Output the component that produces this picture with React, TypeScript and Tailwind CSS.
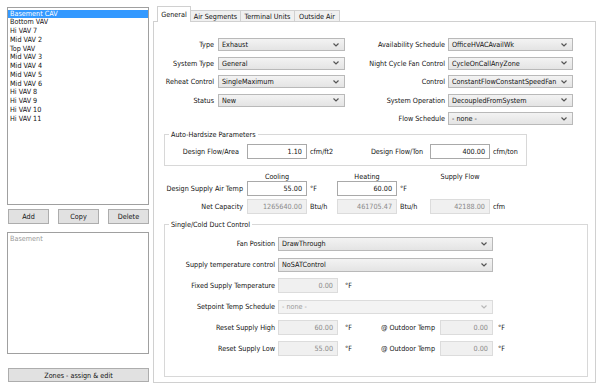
import React from 'react';

const units = ['Basement CAV', 'Bottom VAV', 'Hi VAV 7', 'Mid VAV 2', 'Top VAV', 'Mid VAV 3', 'Mid VAV 4', 'Mid VAV 5', 'Mid VAV 6', 'Hi VAV 8', 'Hi VAV 9', 'Hi VAV 10', 'Hi VAV 11'];

function Chevron({ disabled }: { disabled?: boolean }) {
  return (
    <svg width="6" height="4" viewBox="0 0 6 4" className="shrink-0">
      <path d="M0.5 0.5 L3 3 L5.5 0.5" fill="none" stroke={disabled ? '#b8b8b8' : '#555'} strokeWidth="1.2" />
    </svg>
  );
}

function Select({ value, w, h = 'h-[13px]', disabled }: { value: string; w: string; h?: string; disabled?: boolean }) {
  return (
    <div
      className={`${w} ${h} flex items-center justify-between pl-[3px] pr-[5px] border ${
        disabled ? 'border-[#dcdcdc] bg-[#f3f3f3] text-[#999]' : 'border-[#b9b9b9] bg-linear-to-b from-[#f3f3f3] to-[#e4e4e4] text-[#111]'
      }`}
    >
      <span className="whitespace-nowrap">{value}</span>
      <Chevron disabled={disabled} />
    </div>
  );
}

function Num({ value, w = 'w-[60px]', disabled }: { value: string; w?: string; disabled?: boolean }) {
  return (
    <div
      className={`${w} h-[15px] flex items-center justify-end pr-[4px] border ${
        disabled ? 'border-[#dcdcdc] bg-[#f0f0f0] text-[#8a8a8a]' : 'border-[#a9a9a9] bg-white text-[#111]'
      }`}
    >
      {value}
    </div>
  );
}

function Btn({ label, w }: { label: string; w: string }) {
  return <div className={`${w} flex items-center justify-center border border-[#adadad] bg-[#e1e1e1] text-[#111]`}>{label}</div>;
}

export default function App() {
  const left = [
    ['Type', 'Exhaust'],
    ['System Type', 'General'],
    ['Reheat Control', 'SingleMaximum'],
    ['Status', 'New'],
  ];
  const right = [
    ['Availability Schedule', 'OfficeHVACAvailWk'],
    ['Night Cycle Fan Control', 'CycleOnCallAnyZone'],
    ['Control', 'ConstantFlowConstantSpeedFan'],
    ['System Operation', 'DecoupledFromSystem'],
    ['Flow Schedule', '- none -'],
  ];

  return (
    <div className="w-[602px] h-[384px] bg-white flex items-start text-[7.2px] leading-[9px] text-[#111] font-['DejaVu_Sans_Condensed','Liberation_Sans',sans-serif] overflow-hidden">
      {/* left column */}
      <div className="ml-[7px] mt-[7px] w-[142px] flex flex-col">
        <div className="h-[198px] border border-[#a0a0a0] bg-white pt-[1.5px]">
          {units.map((u, i) => (
            <div key={u} className={`h-[8.77px] leading-[8.77px] pl-[2px] ${i === 0 ? 'bg-[#3399ff] text-white' : ''}`}>
              {u}
            </div>
          ))}
        </div>
        <div className="mt-[4px] h-[15px] flex justify-between pl-[1px]">
          <Btn label="Add" w="w-[41px]" />
          <Btn label="Copy" w="w-[41px]" />
          <Btn label="Delete" w="w-[41px]" />
        </div>
        <div className="mt-[8px] h-[122px] border border-[#a0a0a0] bg-white pl-[2px] pt-[1px] text-[#999]">Basement</div>
        <div className="mt-[14px] h-[14px] flex pl-[1px]">
          <Btn label="Zones - assign & edit" w="w-[141px]" />
        </div>
      </div>

      {/* right tab panel */}
      <div className="ml-[4px] mt-[6px] w-[443px] flex flex-col">
        <div className="flex items-end pl-[4px] h-[15px]">
          <div className="relative z-10 -mb-px h-[16px] w-[34px] flex items-center justify-center border border-b-0 border-[#d0d0d0] bg-white">General</div>
          <div className="h-[11px] w-[50px] flex items-center justify-center border border-l-0 border-b-0 border-[#d0d0d0] bg-[#f0f0f0]">Air Segments</div>
          <div className="h-[11px] w-[54px] flex items-center justify-center border border-l-0 border-b-0 border-[#d0d0d0] bg-[#f0f0f0]">Terminal Units</div>
          <div className="h-[11px] w-[45px] flex items-center justify-center border border-l-0 border-b-0 border-[#d0d0d0] bg-[#f0f0f0]">Outside Air</div>
        </div>
        <div className="h-[362px] border border-[#d0d0d0] bg-white flex flex-col">
          {/* top selects */}
          <div className="mt-[16px] h-[87px] flex items-start">
            <div className="ml-[4px] flex flex-col gap-[5.5px]">
              {left.map(([l, v]) => (
                <div key={l} className="h-[13px] flex items-center">
                  <div className="w-[60px] pr-[4px] text-right whitespace-nowrap">{l}</div>
                  <Select value={v} w="w-[127px]" />
                </div>
              ))}
            </div>
            <div className="flex flex-col gap-[5.5px]">
              {right.map(([l, v]) => (
                <div key={l} className="h-[13px] flex items-center">
                  <div className="w-[103px] pr-[3px] text-right whitespace-nowrap">{l}</div>
                  <Select value={v} w="w-[125px]" />
                </div>
              ))}
            </div>
          </div>

          {/* auto-hardsize */}
          <fieldset className="mt-[5px] ml-[10px] w-[363px] border border-[#d8d8d8] pb-[6px]">
            <legend className="ml-[4px] px-[2px] leading-[9px]">Auto-Hardsize Parameters</legend>
            <div className="mt-[4.5px] flex items-center">
              <div className="w-[82px] pr-[8px] text-right whitespace-nowrap">Design Flow/Area</div>
              <Num value="1.10" />
              <div className="w-[30px] pl-[3px]">cfm/ft2</div>
              <div className="w-[93px] pr-[7px] text-right whitespace-nowrap">Design Flow/Ton</div>
              <Num value="400.00" />
              <div className="pl-[3px]">cfm/ton</div>
            </div>
          </fieldset>

          {/* temperatures */}
          <div className="mt-[6px] flex flex-col">
            <div className="h-[9px] flex items-center">
              <div className="w-[93px]" />
              <div className="w-[60px] text-center">Cooling</div>
              <div className="w-[30px]" />
              <div className="w-[60px] text-center">Heating</div>
              <div className="w-[33px]" />
              <div className="w-[60px] text-center">Supply Flow</div>
            </div>
            <div className="h-[15px] flex items-center">
              <div className="w-[93px] pr-[4px] text-right whitespace-nowrap">Design Supply Air Temp</div>
              <Num value="55.00" />
              <div className="w-[30px] pl-[3px]">°F</div>
              <Num value="60.00" />
              <div className="w-[33px] pl-[3px]">°F</div>
            </div>
            <div className="mt-[3px] h-[15px] flex items-center">
              <div className="w-[93px] pr-[4px] text-right whitespace-nowrap">Net Capacity</div>
              <Num value="1265640.00" disabled />
              <div className="w-[30px] pl-[3px]">Btu/h</div>
              <Num value="461705.47" disabled />
              <div className="w-[33px] pl-[3px]">Btu/h</div>
              <Num value="42188.00" disabled />
              <div className="pl-[3px]">cfm</div>
            </div>
          </div>

          {/* single/cold duct */}
          <fieldset className="mt-[6.5px] ml-[10px] w-[424px] border border-[#d8d8d8] pb-[20px]">
            <legend className="ml-[4px] px-[2px] leading-[9px]">Single/Cold Duct Control</legend>
            <div className="mt-[7.5px] flex flex-col gap-[7px]">
              <div className="h-[14px] flex items-center">
                <div className="w-[113px] pr-[3px] text-right whitespace-nowrap">Fan Position</div>
                <Select value="DrawThrough" w="w-[215px]" h="h-[14px]" />
              </div>
              <div className="h-[14px] flex items-center">
                <div className="w-[113px] pr-[3px] text-right whitespace-nowrap">Supply temperature control</div>
                <Select value="NoSATControl" w="w-[215px]" h="h-[14px]" />
              </div>
              <div className="h-[14px] flex items-center">
                <div className="w-[113px] pr-[3px] text-right whitespace-nowrap">Fixed Supply Temperature</div>
                <Num value="0.00" disabled />
                <div className="pl-[7px]">°F</div>
              </div>
              <div className="h-[14px] flex items-center">
                <div className="w-[113px] pr-[3px] text-right whitespace-nowrap">Setpoint Temp Schedule</div>
                <Select value="- none -" w="w-[215px]" h="h-[14px]" disabled />
              </div>
              {[
                ['Reset Supply High', '60.00'],
                ['Reset Supply Low', '55.00'],
              ].map(([l, v]) => (
                <div key={l} className="h-[14px] flex items-center">
                  <div className="w-[113px] pr-[3px] text-right whitespace-nowrap">{l}</div>
                  <Num value={v} disabled />
                  <div className="w-[42px] pl-[7px]">°F</div>
                  <div className="w-[60px] pr-[5px] text-right whitespace-nowrap">@ Outdoor Temp</div>
                  <Num value="0.00" w="w-[53px]" disabled />
                  <div className="pl-[5px]">°F</div>
                </div>
              ))}
            </div>
          </fieldset>
        </div>
      </div>
    </div>
  );
}
